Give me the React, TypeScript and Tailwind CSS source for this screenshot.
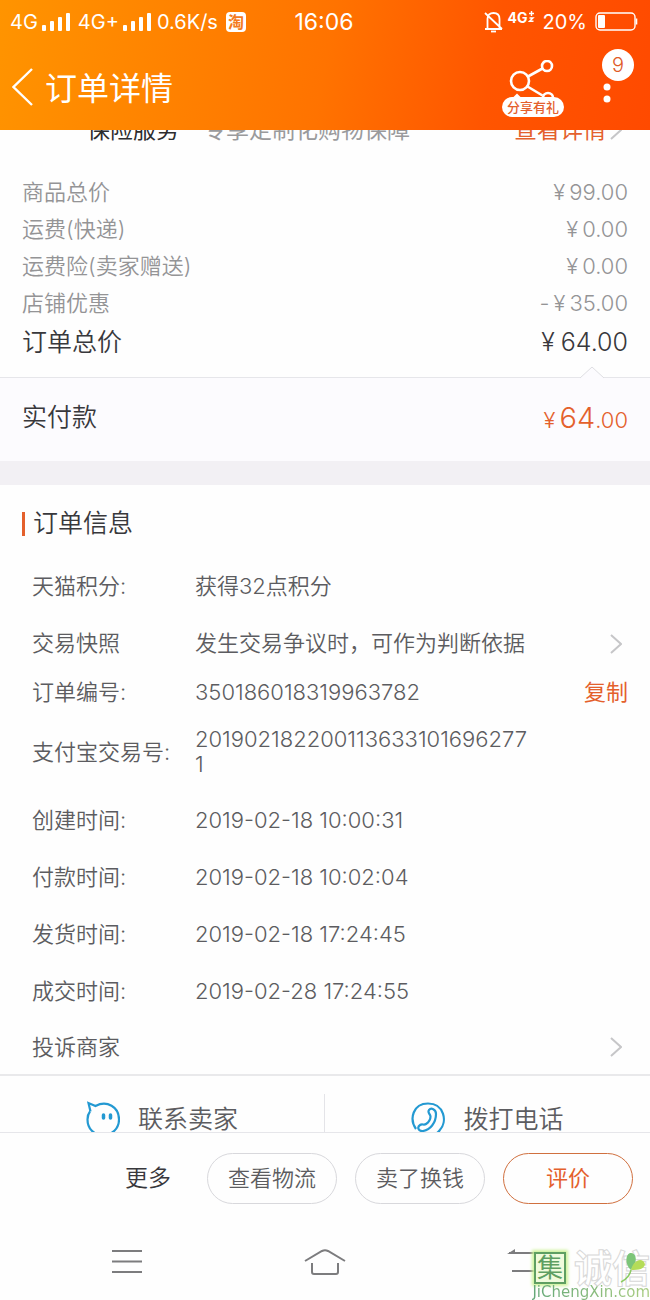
import type { ReactNode } from "react";

const fees = [
  { label: "商品总价", sign: "", value: "99.00" },
  { label: "运费(快递)", sign: "", value: "0.00" },
  { label: "运费险(卖家赠送)", sign: "", value: "0.00" },
  { label: "店铺优惠", sign: "-", value: "35.00" },
];

const times = [
  { label: "创建时间:", value: "2019-02-18 10:00:31" },
  { label: "付款时间:", value: "2019-02-18 10:02:04" },
  { label: "发货时间:", value: "2019-02-18 17:24:45" },
  { label: "成交时间:", value: "2019-02-28 17:24:55" },
];

function Signal() {
  return (
    <svg width="28" height="20" viewBox="0 0 28 20" fill="#fff" aria-hidden="true">
      <rect x="0" y="13" width="4" height="6" rx="1" />
      <rect x="8" y="9" width="4" height="10" rx="1" />
      <rect x="16" y="5" width="4" height="14" rx="1" />
      <rect x="24" y="1" width="4" height="18" rx="1" />
    </svg>
  );
}

function Arrow() {
  return (
    <svg width="12" height="20" viewBox="0 0 12 20" fill="none" stroke="#c6c6c8" strokeWidth="2" aria-hidden="true">
      <path d="M1 1l10 9-10 9" />
    </svg>
  );
}

function StatusBar() {
  return (
    <div className="grid h-11 grid-cols-[1fr_auto_1fr] items-center pl-2.5 pr-3">
      <div className="flex items-center text-xl">
        <span>4G</span>
        <span className="ml-1"><Signal /></span>
        <span className="ml-2">4G+</span>
        <span className="ml-1"><Signal /></span>
        <span className="ml-1.5">0.6K/s</span>
        <span className="ml-2 flex size-5 items-center justify-center rounded bg-white text-base font-bold text-[#f47a20]">淘</span>
      </div>
      <div className="text-[23px]">16:06</div>
      <div className="flex items-center justify-end text-xl">
        <svg width="20" height="22" viewBox="0 0 20 22" fill="none" stroke="#fff" strokeWidth="1.8" aria-hidden="true">
          <path d="M1 18h17M3.500 18V8c0-4 2.500-6 6-6s6 2 6 6v10M1 2l17 16" />
          <path d="M7 20.500h5" />
        </svg>
        <span className="mb-2 ml-1 flex items-start text-sm leading-4 font-bold">
          4G
          <svg width="7" height="12" viewBox="0 0 7 12" fill="none" stroke="#fff" strokeWidth="1.400" aria-hidden="true">
            <path d="M3.500 1v5M1 3.500h5M1.500 8h3.500L1.500 11.300h4" />
          </svg>
        </span>
        <span className="ml-2">20%</span>
        <svg className="ml-2" width="43" height="20" viewBox="0 0 43 20" aria-hidden="true">
          <rect x="1" y="1" width="39" height="17" rx="4" fill="none" stroke="#fff" strokeWidth="1.400" />
          <rect x="3" y="3" width="7" height="13" rx="1" fill="#fff" />
          <path d="M41.500 6.500v6" stroke="#fff" strokeWidth="1.600" />
        </svg>
      </div>
    </div>
  );
}

function TitleBar() {
  return (
    <div className="flex h-[86px] items-center px-3">
      <button type="button" aria-label="返回">
        <svg width="21" height="38" viewBox="0 0 21 38" fill="none" stroke="#fff" strokeWidth="2.400">
          <path d="M20 1L1.500 19 20 37" />
        </svg>
      </button>
      <h1 className="ml-3 flex-1 pt-1 text-[32px]">订单详情</h1>
      <button type="button" className="flex w-16 flex-col items-center pt-0.5">
        <svg width="50" height="37" viewBox="0 0 50 37" fill="none" stroke="#fff" strokeWidth="2.600" aria-hidden="true">
          <circle cx="12" cy="21" r="9" />
          <circle cx="39" cy="6" r="5" />
          <circle cx="40" cy="38" r="5" />
          <path d="M20 16.500l14.500-8M19.500 26.500l15 9" />
          <path d="M5 37.500l4-4 4 4z" fill="#fff" stroke="none" />
        </svg>
        <span className="flex h-5 items-center rounded-full bg-white px-[5px] text-[13px] leading-5 font-medium whitespace-nowrap text-[#e4602c]">分享有礼</span>
      </button>
      <button type="button" aria-label="更多" className="relative ml-[37px] h-16 w-9">
        <svg className="mt-3.5" width="14" height="28" viewBox="0 0 14 28" fill="#fff">
          <circle cx="5" cy="7" r="3.500" />
          <circle cx="5" cy="19" r="3.500" />
        </svg>
        <span className="absolute -top-1.5 left-0 flex size-8 items-center justify-center rounded-full bg-white text-xl font-light text-[#e05a28]">9</span>
      </button>
    </div>
  );
}

function InfoRow({ label, children, action, className = "h-[57px]" }: {
  label: string;
  children?: ReactNode;
  action?: ReactNode;
  className?: string;
}) {
  return (
    <div className={`flex items-center pr-[22px] pl-8 ${className}`}>
      <dt className="w-[163px] shrink-0 whitespace-nowrap">{label}</dt>
      <dd className="min-w-0 flex-1">
        <div className="max-w-[338px] leading-[25px] break-all">{children}</div>
      </dd>
      {action && <dd className="flex items-center">{action}</dd>}
    </div>
  );
}

function Watermark() {
  return (
    <div className="pointer-events-none absolute right-0 bottom-0 flex flex-col items-end">
      <div className="flex items-center gap-2">
        <span className="flex size-8 items-center justify-center border-2 border-[#5f9f62] bg-[#f0fbdc] text-[26px] leading-none text-[#5f9f62] shadow-[0_0_3px_2px_#cdf29a]">集</span>
        <span className="relative flex text-[38px] leading-8 font-bold text-white [-webkit-text-stroke:1px_#d8d8d8]">
          诚信
          <svg className="absolute right-1 bottom-0" width="28" height="32" viewBox="0 0 28 32" aria-hidden="true">
            <path d="M13 18C7 13 7 3 12 1c5-1 7 5 5 10z" fill="#7cc578" />
            <path d="M13 18c2-8 8-12 12-9s2 10-12 9z" fill="#b4dc58" />
            <path d="M13 18c-1 5-4 9-10 12" fill="none" stroke="#8acb62" strokeWidth="1.500" />
          </svg>
        </span>
      </div>
      <span className="bg-linear-to-r from-[#64a878] to-[#a8cc80] bg-clip-text font-['DejaVu_Sans'] text-[15px] leading-4 text-transparent">JiChengXin.com</span>
    </div>
  );
}

export default function App() {
  return (
    <div className="relative flex min-h-screen flex-col bg-[#fefefe] font-['Inter','Noto_Sans_CJK_SC',sans-serif] text-[22px] text-[#68686b]">
      <header className="bg-[linear-gradient(100deg,#ff9400,#ff7300_50%,#ff5500_75%,#ff4a00)] text-white">
        <StatusBar />
        <TitleBar />
      </header>

      <main className="flex-1">
        {/* insurance row, scrolled under the header */}
        <div className="flex h-3 items-end overflow-hidden pr-7 pl-[87px] text-[23px] leading-6">
          <span className="text-[#2c2c2e]">保险服务</span>
          <span className="ml-6 flex-1 text-[#9a9a9c]">专享定制化购物保障</span>
          <a href="#insurance" className="flex items-center gap-1 text-[#e4602c]">
            查看详情
            <Arrow />
          </a>
        </div>

        {/* price summary */}
        <dl className="px-[22px] pt-8 pb-[14px] font-[350] text-[#949496]">
          {fees.map((fee) => (
            <div key={fee.label} className="flex h-[37px] items-center justify-between">
              <dt>{fee.label}</dt>
              <dd className="flex gap-1">
                {fee.sign && <span>{fee.sign}</span>}
                <span>¥</span>
                <span>{fee.value}</span>
              </dd>
            </div>
          ))}
          <div className="flex h-[41px] items-center justify-between text-[25px] text-[#38383c]">
            <dt>订单总价</dt>
            <dd className="flex gap-1.5">
              <span>¥</span>
              <span>64.00</span>
            </dd>
          </div>
        </dl>

        <section className="relative flex h-[84px] items-center justify-between border-t border-[#e6e6ea] bg-[#fcfbfe] px-[22px] pb-1">
          <svg className="absolute -top-3 right-[46px]" width="24" height="13" viewBox="0 0 24 13" aria-hidden="true">
            <path d="M0 12L12 1l12 11v1H0z" fill="#fcfbfe" />
            <path d="M0 12L12 1l12 11" fill="none" stroke="#dedee2" />
          </svg>
          <h2 className="text-[25px] font-[350] text-[#38383c]">实付款</h2>
          <p className="flex items-baseline font-[350] text-[#e4602c]">
            <span>¥</span>
            <span className="ml-1 text-[29px]">64</span>
            <span>.00</span>
          </p>
        </section>

        <div className="h-6 bg-[#f2f0f4]" />

        {/* order info */}
        <section>
          <div className="flex h-[73px] items-center gap-2 px-[22px] pt-1">
            <span className="h-6 w-[3px] bg-[#e4602c]" />
            <h2 className="text-[25px] font-[350] text-[#38383c]">订单信息</h2>
          </div>
          <dl className="border-b-2 border-[#e9e9eb] font-[350] text-[#5c5c60]">
            <InfoRow label="天猫积分:">获得32点积分</InfoRow>
            <InfoRow label="交易快照" action={<a href="#snapshot" aria-label="交易快照" className="pr-1.5"><Arrow /></a>}>
              发生交易争议时，可作为判断依据
            </InfoRow>
            <InfoRow
              label="订单编号:"
              className="h-10"
              action={<button type="button" className="font-normal text-[#e4602c]">复制</button>}
            >
              350186018319963782
            </InfoRow>
            <InfoRow label="支付宝交易号:" className="h-20">2019021822001136331016962771</InfoRow>
            {times.map((time) => (
              <InfoRow key={time.label} label={time.label}>{time.value}</InfoRow>
            ))}
            <InfoRow label="投诉商家" className="h-[54px]" action={<a href="#complain" aria-label="投诉商家" className="pr-1.5"><Arrow /></a>} />
          </dl>
        </section>

        {/* contact row, cut by the action bar */}
        <div className="grid h-14 grid-cols-2 overflow-hidden pt-[18px] text-[25px] leading-6 font-[350] text-[#5c5c60]">
          <button type="button" className="flex h-[50px] items-center justify-center gap-[18px] border-r border-[#e4e4e8]">
            <svg width="34" height="36" viewBox="0 0 34 36" fill="none" stroke="#2399d2" strokeWidth="2.200" aria-hidden="true">
              <path d="M4.500 10.500L2.500 2l7 3C21-1 33 6 33 18.500 33 28 26 34 17 34S1.500 28 1.500 18.500c0-3 .5-5.500 2.500-8" />
              <path d="M17.500 14v3M24.500 14v3" strokeWidth="3.500" strokeLinecap="round" />
            </svg>
            联系卖家
          </button>
          <button type="button" className="flex h-[50px] items-center justify-center gap-[18px]">
            <svg width="34" height="36" viewBox="0 0 34 36" fill="none" stroke="#2399d2" strokeWidth="2.200" aria-hidden="true">
              <path d="M5 28C-2 18 2 2.500 17 2.500c16 0 20 18 11.500 27-2 2.500-5 4.500-8 5" />
              <path d="M18 9c2-2.500 7-1 7 4 0 9-6 16-13 17-5 .5-6-4-3-6 2-1.500 4 .5 6-1 3-2 4.500-5 4.500-7.500 0-2.500-3.500-3.500-1.500-6.500z" />
            </svg>
            拨打电话
          </button>
        </div>
      </main>

      <footer className="border-t border-[#e6e6ea]">
        <div className="flex items-center justify-end gap-[18px] px-[17px] pt-5 font-[350] text-[#5c5c60]">
          <button type="button" className="mr-[18px] text-[23px] text-[#38383c]">更多</button>
          <button type="button" className="h-[51px] w-[130px] rounded-full border border-[#d8d8dc] whitespace-nowrap">查看物流</button>
          <button type="button" className="h-[51px] w-[130px] rounded-full border border-[#d8d8dc] whitespace-nowrap">卖了换钱</button>
          <button type="button" className="h-[51px] w-[130px] rounded-full border border-[#d0703f] font-normal text-[#e4602c]">评价</button>
        </div>
        <nav className="grid h-24 grid-cols-3 items-center px-7 pt-5">
          <button type="button" aria-label="菜单" className="flex justify-center">
            <svg width="30" height="26" viewBox="0 0 30 26" stroke="#7c7c7e" strokeWidth="2">
              <path d="M0 2h30M0 12.500h30M0 23h30" />
            </svg>
          </button>
          <button type="button" aria-label="主页" className="flex justify-center">
            <svg width="42" height="28" viewBox="0 0 42 28" fill="none" stroke="#7c7c7e" strokeWidth="2">
              <path d="M1 13L18 3q3-1.500 6 0l17 10M8 15v9q0 2 2 2h22q2 0 2-2v-9" />
            </svg>
          </button>
          <button type="button" aria-label="后退" className="flex justify-center">
            <svg width="32" height="28" viewBox="0 0 32 28" fill="none" stroke="#7c7c7e" strokeWidth="2">
              <path d="M2 5h28v18H5" />
              <path d="M0 6l8-5v5z" fill="#7c7c7e" stroke="none" />
            </svg>
          </button>
        </nav>
      </footer>

      <Watermark />
    </div>
  );
}
